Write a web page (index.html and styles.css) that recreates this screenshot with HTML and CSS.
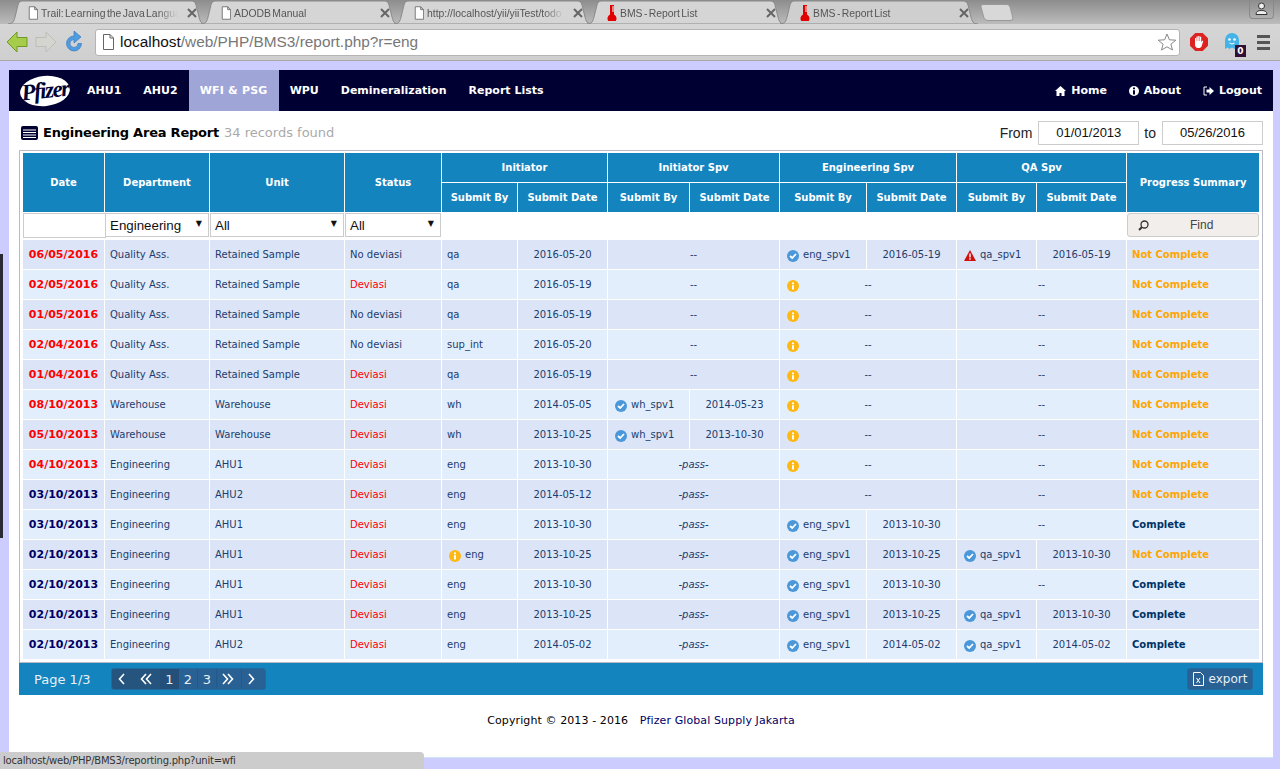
FILE: index.html
```html
<!DOCTYPE html>
<html lang="en">
<head>
  <meta charset="UTF-8" />
  <title>BMS-Report List</title>
  <link rel="stylesheet" href="styles.css">
</head>
<body>
  <svg class="defs" width="0" height="0">
    <symbol id="i-tab" viewBox="0 0 198 24" preserveAspectRatio="none">
      <path d="M0 24 C5 24 6 21 7 17 L10 5 C11 2 12 1 16 1 L182 1 C186 1 187 2 188 5 L191 17 C192 21 193 24 198 24 Z" />
    </symbol>
    <symbol id="i-doc" viewBox="0 0 12 16">
      <path d="M1.500 .5H8L11.500 4V15.500H1.500Z M8 .5V4H11.500" fill="#fff" stroke="#666" />
    </symbol>
    <symbol id="i-thermo" viewBox="0 0 10 16">
      <path d="M3 0H7V9.500A4.500 4.500 0 1 1 3 9.500Z" fill="#e00000" />
      <path d="M5 2H7M5 4H7M5 6H7" stroke="#fff" />
    </symbol>
    <symbol id="i-x" viewBox="0 0 10 10">
      <path d="M1 1L9 9M9 1L1 9" stroke="#666" stroke-width="2" />
    </symbol>
    <symbol id="i-ok" viewBox="0 0 12 12">
      <circle cx="6" cy="6" r="6" fill="#4a97d9" />
      <path d="M3 6L5.200 8L9 4" fill="none" stroke="#fff" stroke-width="1.800" />
    </symbol>
    <symbol id="i-info" viewBox="0 0 12 12">
      <circle cx="6" cy="6" r="6" fill="#fdb813" />
      <path d="M5 2.500H7V4.300H5ZM5 5.300H7V9.500H5Z" fill="#fff" />
    </symbol>
    <symbol id="i-warn" viewBox="0 0 12 12">
      <path d="M6 0L12 11H0Z" fill="#d01010" />
      <path d="M5.300 3.500H6.700V7.500H5.300ZM5.300 8.300H6.700V9.800H5.300Z" fill="#fff" />
    </symbol>
  </svg>

  <header class="tabstrip">
    <div class="tab">
      <svg class="tab-bg"><use href="#i-tab" /></svg>
      <svg class="tab-ico"><use href="#i-doc" /></svg>
      <span class="tab-text">Trail: Learning the Java Language</span>
      <svg class="tab-x"><use href="#i-x" /></svg>
    </div>
    <div class="tab">
      <svg class="tab-bg"><use href="#i-tab" /></svg>
      <svg class="tab-ico"><use href="#i-doc" /></svg>
      <span class="tab-text">ADODB Manual</span>
      <svg class="tab-x"><use href="#i-x" /></svg>
    </div>
    <div class="tab">
      <svg class="tab-bg"><use href="#i-tab" /></svg>
      <svg class="tab-ico"><use href="#i-doc" /></svg>
      <span class="tab-text">http://localhost/yii/yiiTest/todo</span>
      <svg class="tab-x"><use href="#i-x" /></svg>
    </div>
    <div class="tab">
      <svg class="tab-bg"><use href="#i-tab" /></svg>
      <svg class="tab-ico"><use href="#i-thermo" /></svg>
      <span class="tab-text">BMS - Report List</span>
      <svg class="tab-x"><use href="#i-x" /></svg>
    </div>
    <div class="tab tab-active">
      <svg class="tab-bg"><use href="#i-tab" /></svg>
      <svg class="tab-ico"><use href="#i-thermo" /></svg>
      <span class="tab-text">BMS - Report List</span>
      <svg class="tab-x"><use href="#i-x" /></svg>
    </div>
    <div class="newtab"></div>
    <div class="profile">
      <svg width="13" height="14" viewBox="0 0 13 14">
        <circle cx="6.500" cy="4" r="3" fill="#eee" stroke="#333" />
        <path d="M1 12.500C1 9.500 3 8.500 6.500 8.500S12 9.500 12 12.500Z" fill="#eee" stroke="#333" />
      </svg>
    </div>
  </header>

  <div class="toolbar">
    <div class="navbtns">
      <svg width="22" height="22" viewBox="0 0 22 22">
        <path d="M11 1V6.500H21V15.500H11V21L1 11Z" fill="#a5cc4a" stroke="#6f9a25" />
      </svg>
      <svg width="22" height="22" viewBox="0 0 22 22">
        <path d="M11 1V6.500H1V15.500H11V21L21 11Z" fill="#d5d5d0" stroke="#bdbdb8" />
      </svg>
      <svg width="20" height="22" viewBox="0 0 20 22">
        <path d="M10 5A7.500 7.500 0 1 0 17.500 12.500H14A4 4 0 1 1 10 8.500V12L17 6L10 0Z" fill="#4f9ce0" stroke="#2a70b8" stroke-width=".6" />
      </svg>
    </div>
    <div class="omnibox">
      <svg class="omni-ico"><use href="#i-doc" /></svg>
      <span class="url"><b>localhost</b>/web/PHP/BMS3/report.php?r=eng</span>
      <svg class="star" width="20" height="18" viewBox="0 0 20 18">
        <path d="M10 1L12.400 6.800L18.800 7.200L13.900 11.200L15.500 17L10 13.800L4.500 17L6.100 11.200L1.200 7.200L7.600 6.800Z" fill="#fff" stroke="#888" />
      </svg>
    </div>
    <div class="ext">
      <svg class="ext-stop" width="18" height="18" viewBox="0 0 18 18">
        <path d="M5.300 0H12.700L18 5.300V12.700L12.700 18H5.300L0 12.700V5.300Z" fill="#dd2222" />
        <path d="M5 8V5H6.200V8H6.500V3.500H7.800V8H8.200V3H9.500V8H9.900V3.800H11.200V9L12.500 7.500L13.300 8L11.500 13.500C11 15 9.500 15 8 15C6 15 5 13.500 5 12Z" fill="#fff" />
      </svg>
      <div class="ext-ghost">
        <svg width="16" height="17" viewBox="0 0 16 17">
          <path d="M1 16V7A7 7 0 0 1 15 7V16L12.500 14.500L10.500 16L8 14.500L5.500 16L3.500 14.500Z" fill="#44b4e8" />
          <circle cx="5.500" cy="6.500" r="1.300" fill="#fff" />
          <circle cx="10.500" cy="6.500" r="1.300" fill="#fff" />
          <path d="M5.500 10Q8 12 10.500 10" fill="none" stroke="#fff" />
        </svg>
        <span class="badge">0</span>
      </div>
      <div class="menu"><i></i><i></i><i></i></div>
    </div>
  </div>

  <div class="edge-strip"></div>

  <div class="page">
    <div class="wrap">
      <nav class="topnav">
        <div class="logo"><span>Pfizer</span></div>
        <a>AHU1</a>
        <a>AHU2</a>
        <a class="active">WFI &amp; PSG</a>
        <a>WPU</a>
        <a>Demineralization</a>
        <a>Report Lists</a>
        <div class="nav-right">
          <a>
            <svg width="11" height="10" viewBox="0 0 11 10"><path d="M5.500 0L11 5H9.500V10H6.500V7H4.500V10H1.500V5H0Z" fill="#fff" /></svg>
            Home
          </a>
          <a>
            <svg width="10" height="10" viewBox="0 0 10 10"><circle cx="5" cy="5" r="5" fill="#fff" /><path d="M4 1.500H6V3.200H4ZM4 4.200H6V8.500H4Z" fill="#000033" /></svg>
            About
          </a>
          <a>
            <svg width="11" height="10" viewBox="0 0 11 10"><path d="M4 1H1V9H4" fill="none" stroke="#fff" /><path d="M3.500 3.500H6.500V1L11 5L6.500 9V6.500H3.500Z" fill="#fff" /></svg>
            Logout
          </a>
        </div>
      </nav>

      <div class="content">
        <div class="titlebar">
          <svg class="title-ico" width="17" height="14" viewBox="0 0 17 14">
            <rect width="17" height="14" rx="2" fill="#000033" />
            <path d="M2 4H15M2 6.500H15M2 9H15M2 11.500H15" stroke="#fff" />
          </svg>
          <h1>Engineering Area Report</h1>
          <span class="count">34 records found</span>
          <div class="range">
            <label>From</label>
            <input class="datebox" type="text" value="01/01/2013">
            <label>to</label>
            <input class="datebox" type="text" value="05/26/2016">
          </div>
        </div>

        <div class="grid-frame">
          <table class="grid">
            <colgroup>
              <col class="c-date"><col class="c-dept"><col class="c-unit"><col class="c-status">
              <col class="c-by1"><col class="c-dt"><col class="c-by2"><col class="c-dt">
              <col class="c-by3"><col class="c-dt"><col class="c-by4"><col class="c-dt">
              <col class="c-prog">
            </colgroup>
            <thead>
              <tr class="h1">
                <th rowspan="2">Date</th>
                <th rowspan="2">Department</th>
                <th rowspan="2">Unit</th>
                <th rowspan="2">Status</th>
                <th colspan="2">Initiator</th>
                <th colspan="2">Initiator Spv</th>
                <th colspan="2">Engineering Spv</th>
                <th colspan="2">QA Spv</th>
                <th rowspan="2">Progress Summary</th>
              </tr>
              <tr class="h2">
                <th>Submit By</th><th>Submit Date</th>
                <th>Submit By</th><th>Submit Date</th>
                <th>Submit By</th><th>Submit Date</th>
                <th>Submit By</th><th>Submit Date</th>
              </tr>
              <tr class="filter">
                <td><input class="f-date" type="text"></td>
                <td><div class="sel"><select><option>Engineering</option></select></div></td>
                <td><div class="sel"><select><option>All</option></select></div></td>
                <td><div class="sel"><select><option>All</option></select></div></td>
                <td colspan="8"></td>
                <td>
                  <button class="find" type="button">
                    <svg width="11" height="11" viewBox="0 0 11 11"><circle cx="6.500" cy="4.500" r="3.500" fill="none" stroke="#333" stroke-width="1.300" /><path d="M4 7L1 10" stroke="#333" stroke-width="2" /></svg>
                    <span>Find</span>
                  </button>
                </td>
              </tr>
            </thead>
            <tbody>
              <tr>
                <td class="dt late">06/05/2016</td><td>Quality Ass.</td><td>Retained Sample</td><td>No deviasi</td>
                <td>qa</td><td class="mid">2016-05-20</td>
                <td class="mid" colspan="2">--</td>
                <td><svg class="ic"><use href="#i-ok" /></svg>eng_spv1</td><td class="mid">2016-05-19</td>
                <td><svg class="ic"><use href="#i-warn" /></svg>qa_spv1</td><td class="mid">2016-05-19</td>
                <td class="nc">Not Complete</td>
              </tr>
              <tr>
                <td class="dt late">02/05/2016</td><td>Quality Ass.</td><td>Retained Sample</td><td class="dev">Deviasi</td>
                <td>qa</td><td class="mid">2016-05-19</td>
                <td class="mid" colspan="2">--</td>
                <td class="mid pin" colspan="2"><svg class="ic ic-pin"><use href="#i-info" /></svg>--</td>
                <td class="mid" colspan="2">--</td>
                <td class="nc">Not Complete</td>
              </tr>
              <tr>
                <td class="dt late">01/05/2016</td><td>Quality Ass.</td><td>Retained Sample</td><td>No deviasi</td>
                <td>qa</td><td class="mid">2016-05-19</td>
                <td class="mid" colspan="2">--</td>
                <td class="mid pin" colspan="2"><svg class="ic ic-pin"><use href="#i-info" /></svg>--</td>
                <td class="mid" colspan="2">--</td>
                <td class="nc">Not Complete</td>
              </tr>
              <tr>
                <td class="dt late">02/04/2016</td><td>Quality Ass.</td><td>Retained Sample</td><td>No deviasi</td>
                <td>sup_int</td><td class="mid">2016-05-20</td>
                <td class="mid" colspan="2">--</td>
                <td class="mid pin" colspan="2"><svg class="ic ic-pin"><use href="#i-info" /></svg>--</td>
                <td class="mid" colspan="2">--</td>
                <td class="nc">Not Complete</td>
              </tr>
              <tr>
                <td class="dt late">01/04/2016</td><td>Quality Ass.</td><td>Retained Sample</td><td class="dev">Deviasi</td>
                <td>qa</td><td class="mid">2016-05-19</td>
                <td class="mid" colspan="2">--</td>
                <td class="mid pin" colspan="2"><svg class="ic ic-pin"><use href="#i-info" /></svg>--</td>
                <td class="mid" colspan="2">--</td>
                <td class="nc">Not Complete</td>
              </tr>
              <tr>
                <td class="dt late">08/10/2013</td><td>Warehouse</td><td>Warehouse</td><td class="dev">Deviasi</td>
                <td>wh</td><td class="mid">2014-05-05</td>
                <td><svg class="ic"><use href="#i-ok" /></svg>wh_spv1</td><td class="mid">2014-05-23</td>
                <td class="mid pin" colspan="2"><svg class="ic ic-pin"><use href="#i-info" /></svg>--</td>
                <td class="mid" colspan="2">--</td>
                <td class="nc">Not Complete</td>
              </tr>
              <tr>
                <td class="dt late">05/10/2013</td><td>Warehouse</td><td>Warehouse</td><td class="dev">Deviasi</td>
                <td>wh</td><td class="mid">2013-10-25</td>
                <td><svg class="ic"><use href="#i-ok" /></svg>wh_spv1</td><td class="mid">2013-10-30</td>
                <td class="mid pin" colspan="2"><svg class="ic ic-pin"><use href="#i-info" /></svg>--</td>
                <td class="mid" colspan="2">--</td>
                <td class="nc">Not Complete</td>
              </tr>
              <tr>
                <td class="dt late">04/10/2013</td><td>Engineering</td><td>AHU1</td><td class="dev">Deviasi</td>
                <td>eng</td><td class="mid">2013-10-30</td>
                <td class="mid pass" colspan="2">-pass-</td>
                <td class="mid pin" colspan="2"><svg class="ic ic-pin"><use href="#i-info" /></svg>--</td>
                <td class="mid" colspan="2">--</td>
                <td class="nc">Not Complete</td>
              </tr>
              <tr>
                <td class="dt">03/10/2013</td><td>Engineering</td><td>AHU2</td><td class="dev">Deviasi</td>
                <td>eng</td><td class="mid">2014-05-12</td>
                <td class="mid pass" colspan="2">-pass-</td>
                <td class="mid" colspan="2">--</td>
                <td class="mid" colspan="2">--</td>
                <td class="nc">Not Complete</td>
              </tr>
              <tr>
                <td class="dt">03/10/2013</td><td>Engineering</td><td>AHU1</td><td class="dev">Deviasi</td>
                <td>eng</td><td class="mid">2013-10-30</td>
                <td class="mid pass" colspan="2">-pass-</td>
                <td><svg class="ic"><use href="#i-ok" /></svg>eng_spv1</td><td class="mid">2013-10-30</td>
                <td class="mid" colspan="2">--</td>
                <td class="done">Complete</td>
              </tr>
              <tr>
                <td class="dt">02/10/2013</td><td>Engineering</td><td>AHU1</td><td class="dev">Deviasi</td>
                <td><svg class="ic"><use href="#i-info" /></svg>eng</td><td class="mid">2013-10-25</td>
                <td class="mid pass" colspan="2">-pass-</td>
                <td><svg class="ic"><use href="#i-ok" /></svg>eng_spv1</td><td class="mid">2013-10-25</td>
                <td><svg class="ic"><use href="#i-ok" /></svg>qa_spv1</td><td class="mid">2013-10-30</td>
                <td class="nc">Not Complete</td>
              </tr>
              <tr>
                <td class="dt">02/10/2013</td><td>Engineering</td><td>AHU1</td><td class="dev">Deviasi</td>
                <td>eng</td><td class="mid">2013-10-30</td>
                <td class="mid pass" colspan="2">-pass-</td>
                <td><svg class="ic"><use href="#i-ok" /></svg>eng_spv1</td><td class="mid">2013-10-30</td>
                <td class="mid" colspan="2">--</td>
                <td class="done">Complete</td>
              </tr>
              <tr>
                <td class="dt">02/10/2013</td><td>Engineering</td><td>AHU1</td><td class="dev">Deviasi</td>
                <td>eng</td><td class="mid">2013-10-25</td>
                <td class="mid pass" colspan="2">-pass-</td>
                <td><svg class="ic"><use href="#i-ok" /></svg>eng_spv1</td><td class="mid">2013-10-25</td>
                <td><svg class="ic"><use href="#i-ok" /></svg>qa_spv1</td><td class="mid">2013-10-30</td>
                <td class="done">Complete</td>
              </tr>
              <tr>
                <td class="dt">02/10/2013</td><td>Engineering</td><td>AHU2</td><td class="dev">Deviasi</td>
                <td>eng</td><td class="mid">2014-05-02</td>
                <td class="mid pass" colspan="2">-pass-</td>
                <td><svg class="ic"><use href="#i-ok" /></svg>eng_spv1</td><td class="mid">2014-05-02</td>
                <td><svg class="ic"><use href="#i-ok" /></svg>qa_spv1</td><td class="mid">2014-05-02</td>
                <td class="done">Complete</td>
              </tr>
            </tbody>
          </table>
        </div>

        <div class="pagerbar">
          <span class="pageno">Page 1/3</span>
          <div class="pager">
            <a class="off p-prev">
              <svg width="7" height="12" viewBox="0 0 7 12"><path d="M6 1L1.500 6L6 11" fill="none" stroke="#fff" stroke-width="1.600" /></svg>
            </a>
            <a class="off p-first">
              <svg width="12" height="12" viewBox="0 0 12 12"><path d="M6 1L1.500 6L6 11M11 1L6.500 6L11 11" fill="none" stroke="#fff" stroke-width="1.600" /></svg>
            </a>
            <a class="cur p-num">1</a>
            <a class="p-num">2</a>
            <a class="p-num">3</a>
            <a class="p-last">
              <svg width="12" height="12" viewBox="0 0 12 12"><path d="M1 1L5.500 6L1 11M6 1L10.500 6L6 11" fill="none" stroke="#fff" stroke-width="1.600" /></svg>
            </a>
            <a class="p-next">
              <svg width="7" height="12" viewBox="0 0 7 12"><path d="M1 1L5.500 6L1 11" fill="none" stroke="#fff" stroke-width="1.600" /></svg>
            </a>
          </div>
          <button class="export" type="button">
            <svg width="11" height="14" viewBox="0 0 11 14"><path d="M.5 .5H7.500L10.500 3.500V13.500H.5Z" fill="none" stroke="#fff" /><path d="M3.500 6L7 11M7 6L3.500 11" stroke="#fff" /></svg>
            export
          </button>
        </div>

        <footer class="copy">Copyright &copy; 2013 - 2016 <a>Pfizer Global Supply Jakarta</a></footer>
      </div>
    </div>
  </div>

  <div class="statusbar">localhost/web/PHP/BMS3/reporting.php?unit=wfi</div>
</body>
</html>
```

FILE: styles.css
```css
* {
  box-sizing: border-box;
}

html, body {
  margin: 0;
  height: 769px;
  overflow: hidden;
}

body {
  font-family: "DejaVu Sans", sans-serif;
  font-size: 10px;
  background-color: #ccccff;
  position: relative;
}

.defs {
  position: absolute;
}

/* browser chrome */
.tabstrip {
  height: 24px;
  display: flex;
  align-items: flex-end;
  padding-left: 8px;
  background: linear-gradient(#8d8d8d, #bcbcbc);
  position: relative;
}

.tab {
  width: 198px;
  height: 24px;
  margin-right: -5px;
  position: relative;
  display: flex;
  align-items: center;
  padding: 2px 0 0 20px;
  color: #555;
  font-family: "Liberation Sans", sans-serif;
  font-size: 10.4px;
  word-spacing: -1.5px;
}

.tab-bg {
  position: absolute;
  left: 0;
  top: 0;
  width: 100%;
  height: 100%;
  fill: #d5d5d5;
  stroke: #8a8a8a;
}

.tab-active .tab-bg {
  fill: #cfcfcf;
}

.tab-active {
  z-index: 2;
}

.tab-ico {
  width: 10px;
  height: 16px;
  position: relative;
  flex: none;
}

.tab-text {
  position: relative;
  width: 137px;
  margin-left: 3px;
  white-space: nowrap;
  overflow: hidden;
  -webkit-mask-image: linear-gradient(to right, #000 85%, transparent);
  mask-image: linear-gradient(to right, #000 85%, transparent);
}

.tab-x {
  position: relative;
  width: 10px;
  height: 10px;
  margin-left: 9px;
  flex: none;
}

.newtab {
  width: 30px;
  height: 17px;
  margin: 0 0 3px 9px;
  background-color: #d8d8d8;
  border: 1px solid #999;
  border-radius: 3px 3px 4px 4px;
  transform: skewX(15deg);
}

.profile {
  position: absolute;
  right: 6px;
  top: 0;
  width: 25px;
  height: 19px;
  border: 1px solid #888;
  border-top: none;
  border-radius: 0 0 4px 4px;
  display: flex;
  align-items: center;
  justify-content: center;
}

.toolbar {
  height: 37px;
  display: flex;
  align-items: center;
  padding: 0 10px 0 6px;
  background: linear-gradient(#d6d6d6, #cfcfcf);
  border-bottom: 1px solid #a8a8a8;
}

.navbtns {
  display: flex;
  align-items: center;
  gap: 7px;
  width: 89px;
  flex: none;
}

.omnibox {
  width: 1086px;
  height: 27px;
  background-color: #fff;
  border: 1px solid #b4b4b4;
  border-radius: 3px;
  display: flex;
  align-items: center;
  padding: 0 2px 0 6px;
}

.omni-ico {
  width: 12px;
  height: 16px;
  flex: none;
}

.url {
  margin-left: 6px;
  font-family: "Liberation Sans", sans-serif;
  font-size: 15.4px;
  color: #777;
  white-space: nowrap;
}

.url b {
  font-weight: normal;
  color: #111;
}

.star {
  margin-left: auto;
}

.ext {
  display: flex;
  align-items: center;
  flex: none;
}

.ext-stop {
  margin-left: 10px;
}

.ext-ghost {
  margin-left: 16px;
  position: relative;
  height: 18px;
}

.badge {
  position: absolute;
  left: 11px;
  top: 12px;
  width: 11px;
  height: 12px;
  background-color: #301035;
  color: #fff;
  font-size: 9px;
  font-weight: bold;
  line-height: 12px;
  text-align: center;
}

.menu {
  margin-left: 17px;
  width: 13px;
  display: flex;
  flex-direction: column;
  gap: 3px;
}

.menu i {
  display: block;
  height: 3px;
  background-color: #555;
}

.edge-strip {
  position: absolute;
  left: 0;
  top: 254px;
  width: 3px;
  height: 284px;
  background-color: #2a2a33;
}

/* page */
.page {
  padding: 9px 7px 0 9px;
}

.wrap {
  background-color: #fff;
  height: 688px;
  border-bottom: 1px solid #cfe3f5;
}

.topnav {
  height: 41px;
  background-color: #000033;
  display: flex;
  align-items: stretch;
  color: #fff;
}

.topnav a {
  display: flex;
  align-items: center;
  padding: 0 11px;
  color: #fff;
  font-size: 11px;
  font-weight: bold;
}

.topnav a.active {
  background-color: #a0a5d8;
  letter-spacing: .22px;
}

.logo {
  width: 67px;
  flex: none;
  display: flex;
  align-items: center;
  padding-left: 11px;
}

.logo span {
  width: 50px;
  height: 30px;
  border-radius: 50%;
  background-color: #fff;
  color: #000033;
  font-family: "Liberation Serif", serif;
  font-size: 23px;
  font-style: italic;
  font-weight: bold;
  letter-spacing: -1.500px;
  line-height: 30px;
  text-align: center;
  transform: rotate(-6deg);
}

.nav-right {
  margin-left: auto;
  display: flex;
}

.nav-right a {
  gap: 5px;
}

.content {
  padding: 0 10px;
}

.titlebar {
  height: 39px;
  display: flex;
  align-items: center;
  padding: 4px 0 0 2px;
  font-size: 13px;
}

.title-ico {
  margin-right: 5px;
}

.titlebar h1 {
  margin: 0 5px 0 0;
  font-size: 13px;
  font-weight: bold;
  letter-spacing: -.22px;
  color: #000;
}

.count {
  color: #aaa;
}

.range {
  margin-left: auto;
  display: flex;
  align-items: center;
  font-family: "Liberation Sans", sans-serif;
  font-size: 14px;
  color: #222;
}

.datebox {
  width: 101px;
  height: 24px;
  margin: 0 5px 0 6px;
  border: 1px solid #ccc;
  font-family: "Liberation Sans", sans-serif;
  font-size: 13px;
  text-align: center;
  color: #111;
}

.datebox:last-child {
  margin-right: 0;
}

.grid-frame {
  height: 513px;
  border: 1px solid #b9b9c8;
  padding: 1px 2px;
}

.grid {
  table-layout: fixed;
  border-collapse: separate;
  border-spacing: 1px;
  width: 1238px;
}

.c-date { width: 81px; }
.c-dept { width: 104px; }
.c-unit { width: 134px; }
.c-status { width: 96px; }
.c-by1 { width: 75px; }
.c-dt { width: 89px; }
.c-by2 { width: 81px; }
.c-by3 { width: 86px; }
.c-by4 { width: 79px; }
.c-prog { width: 132px; }

.grid th {
  background-color: #1484bf;
  color: #fff;
  font-size: 10px;
  font-weight: bold;
  padding: 0;
  text-align: center;
}

.h1 { height: 29px; }
.h2 { height: 29px; }

.filter {
  height: 26px;
}

.filter td {
  background-color: #fff;
  padding: 0;
  height: 26px;
  vertical-align: top;
}

.f-date {
  display: block;
  width: 83px;
  height: 25px;
  border: 1px solid #ccc;
  padding: 0;
  position: relative;
}

.sel {
  position: relative;
  height: 24px;
}

.sel::after {
  content: "\25BC";
  position: absolute;
  right: 7px;
  top: 6px;
  font-size: 8px;
  color: #111;
}

.sel select {
  display: block;
  width: 100%;
  height: 24px;
  padding: 0 0 0 4px;
  appearance: none;
  -webkit-appearance: none;
  background-color: #fff;
  border: 1px solid #ccc;
  border-radius: 0;
  font-family: "Liberation Sans", sans-serif;
  font-size: 13.33px;
  color: #111;
}

.find {
  display: flex;
  align-items: center;
  width: 100%;
  height: 24px;
  padding: 0 0 0 10px;
  background-color: #f2eeec;
  border: 1px solid #ccc;
  border-radius: 3px;
  font-family: "Liberation Sans", sans-serif;
  font-size: 12px;
  color: #444;
}

.find span {
  margin-left: 41px;
}

.grid tbody td {
  height: 29px;
  padding: 0 0 0 5px;
  background-color: #dbe5f7;
  color: #1d3c6e;
  white-space: nowrap;
}

.grid tbody tr:nth-child(even) td {
  background-color: #e3eefd;
}

.grid td.mid {
  text-align: center;
  padding: 0;
}

.grid td.dt {
  padding: 0;
  text-align: center;
  font-size: 11px;
  font-weight: bold;
  color: #000066;
}

.grid td.late {
  color: #ff0000;
}

.grid td.dev {
  color: #ff0000;
}

.grid td.pass {
  font-style: italic;
}

.grid td.nc {
  font-weight: bold;
  color: #ffa500;
}

.grid td.done {
  font-weight: bold;
  color: #003366;
}

.pin {
  position: relative;
}

.ic {
  width: 12px;
  height: 12px;
  margin: -4px 4px -4px 2px;
  vertical-align: baseline;
}

.ic-pin {
  position: absolute;
  left: 7px;
  top: 10px;
  margin: 0;
}

.pagerbar {
  height: 32px;
  background-color: #1484bf;
  display: flex;
  align-items: center;
  padding: 0 10px 0 15px;
  font-size: 13px;
  color: #e8f0f6;
}

.pageno {
  width: 77px;
}

.pager {
  display: flex;
  height: 22px;
  width: 155px;
  background-color: #2a6194;
  border: 1px solid #1f6b9e;
  border-radius: 3px;
  overflow: hidden;
}

.pager a {
  display: flex;
  align-items: center;
  justify-content: center;
  border-right: 1px solid #1f5a8a;
  color: #e8f0f6;
}

.pager a:last-child {
  border-right: none;
}

.pager a.off {
  background-color: #25557f;
  border-right: none;
}

.pager a.cur {
  background-color: #234f78;
  border-right: none;
}

.p-prev { width: 19px; }
.p-first { width: 29px; }
.p-num { width: 19px; }
.p-last { width: 25px; padding-right: 3px; }
.p-next { flex: 1; padding-right: 4px; }

.export {
  margin-left: auto;
  width: 66px;
  height: 22px;
  padding: 0;
  display: flex;
  align-items: center;
  justify-content: center;
  gap: 5px;
  background-color: #2a6194;
  border: 1px solid #1f6b9e;
  border-radius: 3px;
  font-family: "DejaVu Sans", sans-serif;
  font-size: 12px;
  color: #e8f0f6;
}

.copy {
  margin-top: 19px;
  text-align: center;
  font-size: 11px;
  letter-spacing: .1px;
  color: #000;
}

.copy a {
  margin-left: 8px;
  color: #000066;
}

.statusbar {
  position: absolute;
  left: 0;
  bottom: 0;
  width: 424px;
  height: 17px;
  padding: 3px 0 0 3px;
  background-color: #cccccc;
  border-radius: 0 4px 0 0;
  color: #333;
  font-size: 10px;
  letter-spacing: -.22px;
}
```
